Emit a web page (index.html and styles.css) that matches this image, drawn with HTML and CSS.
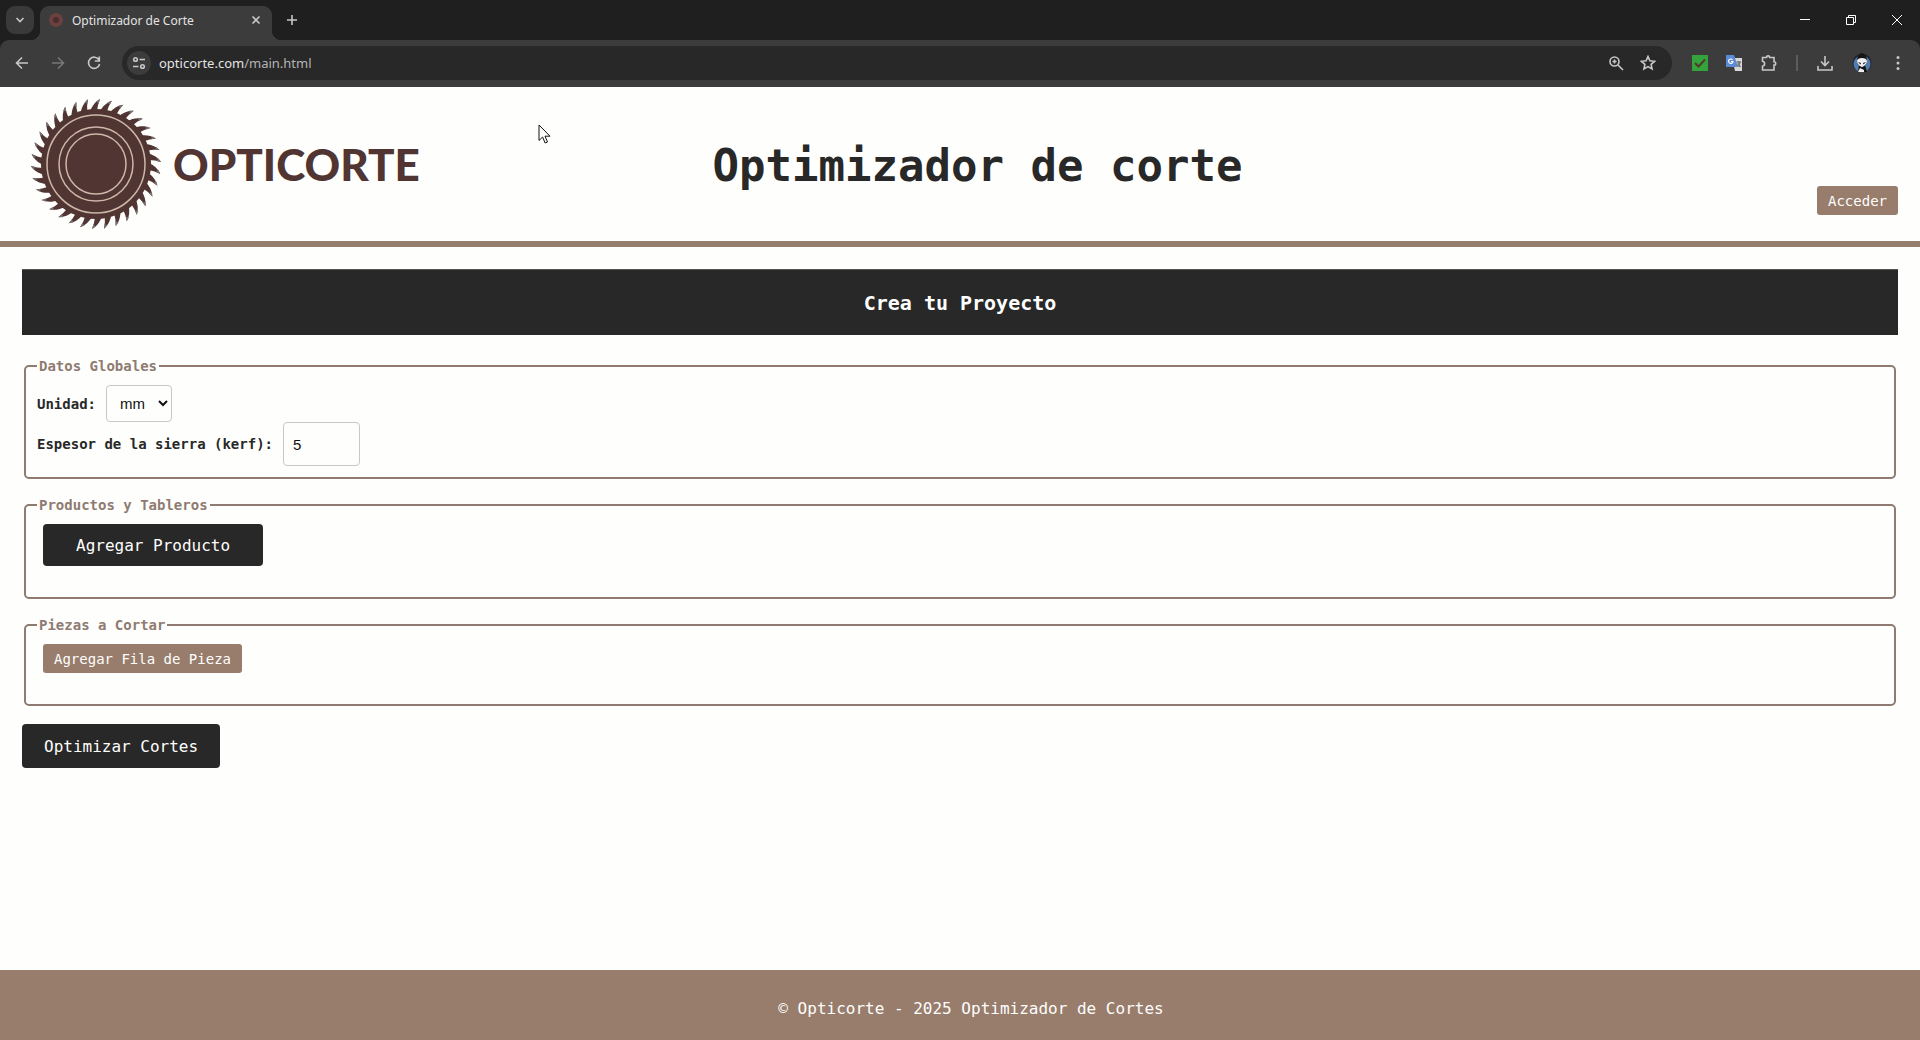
FILE: index.html
```html
<!DOCTYPE html>
<html lang="es">
  <head>
    <meta charset="UTF-8" />
    <meta name="viewport" content="width=device-width, initial-scale=1.0" />
    <title>Optimizador de Corte</title>
    <link rel="stylesheet" href="styles.css">
  </head>
  <body>
    <div class="browser">
      <div class="tabstrip">
        <button class="tab-search" aria-label="Buscar pestañas">
          <svg width="10" height="10" viewBox="0 0 10 10"><path d="M1.500 3l3.500 3.500L8.500 3" /></svg>
        </button>
        <div class="tab">
          <svg class="favicon" width="16" height="16" viewBox="0 0 16 16">
            <circle class="blade" cx="8" cy="8" r="7" />
            <circle class="hub" cx="8" cy="8" r="3" />
          </svg>
          <span class="tab-title">Optimizador de Corte</span>
          <button class="tab-close" aria-label="Cerrar">
            <svg width="10" height="10" viewBox="0 0 10 10"><path d="M1.500 1.500l7 7M8.500 1.500l-7 7" /></svg>
          </button>
        </div>
        <button class="tab-new" aria-label="Nueva pestaña">
          <svg width="12" height="12" viewBox="0 0 12 12"><path d="M6 1v10M1 6h10" /></svg>
        </button>
        <div class="window-buttons">
          <button aria-label="Minimizar"><svg width="12" height="12" viewBox="0 0 12 12"><path d="M1 5.500h10" /></svg></button>
          <button aria-label="Restaurar"><svg width="12" height="12" viewBox="0 0 12 12"><path d="M1.500 3.500h7v7h-7zM3.500 3.500v-2h7v7h-2" /></svg></button>
          <button aria-label="Cerrar ventana"><svg width="12" height="12" viewBox="0 0 12 12"><path d="M1 1l10 10M11 1L1 11" /></svg></button>
        </div>
      </div>
      <div class="toolbar">
        <button aria-label="Atrás"><svg width="16" height="16" viewBox="0 0 16 16"><path d="M14 8H3M8 2.500L2.500 8 8 13.500" /></svg></button>
        <button class="off" aria-label="Adelante"><svg width="16" height="16" viewBox="0 0 16 16"><path d="M2 8h11M8 2.500L13.500 8 8 13.500" /></svg></button>
        <button aria-label="Recargar"><svg width="16" height="16" viewBox="0 0 16 16"><path d="M13 5A5.600 5.600 0 1 0 13.600 9M13.300 1.500V6H8.800" /></svg></button>
        <div class="omnibox">
          <button class="site-info" aria-label="Información del sitio">
            <svg width="14" height="14" viewBox="0 0 14 14"><circle cx="3.500" cy="3.500" r="1.800" /><path d="M7.500 3.500H13M1 10.500h5.500" /><circle cx="10.500" cy="10.500" r="1.800" /></svg>
          </button>
          <p class="url">opticorte.com<span>/main.html</span></p>
          <button aria-label="Zoom"><svg width="16" height="16" viewBox="0 0 16 16"><circle cx="6.500" cy="6.500" r="4.500" /><path d="M10 10l5 5M4.500 6.500h4M6.500 4.500v4" /></svg></button>
          <button aria-label="Favoritos"><svg width="16" height="16" viewBox="0 0 16 16"><path d="M8 1.500l1.900 4.300 4.700.500-3.500 3.100 1 4.600L8 11.600 3.900 14l1-4.600L1.400 6.300l4.700-.500z" /></svg></button>
        </div>
        <div class="extensions">
          <button aria-label="Tareas">
            <svg width="16" height="16" viewBox="0 0 16 16"><path class="fill-green" d="M0 0h16v16H0z" /><path class="tick" d="M3 8l3.500 3.500L13 4.500" /></svg>
          </button>
          <button aria-label="Traductor">
            <svg class="plain" width="16" height="16" viewBox="0 0 16 16">
              <path fill="#d8d8d8" d="M6 3h10v13H9z" />
              <path fill="#5b8bd6" d="M0 0h8l4 12H0z" />
              <path d="M6.500 4.800A2.200 2.200 0 1 0 7 6.500H5" fill="none" stroke="#fff" stroke-width="1.200" />
              <path d="M10.500 7H15M12.700 6v1M14 7c-.500 2.500-1.500 3.500-2.500 4.500M11.500 8.500l3 3.500" fill="none" stroke="#777" />
            </svg>
          </button>
          <button aria-label="Extensiones"><svg width="18" height="18" viewBox="0 0 18 18"><path d="M2.500 3.500h4a1.600 1.600 0 0 1 3.200 0H14v4.200a1.600 1.600 0 0 1 0 3.400V16H2.500v-3.800c2.800-.500 2.800-4.400 0-4.900z" /></svg></button>
          <span class="divider"></span>
          <button aria-label="Descargas"><svg width="18" height="18" viewBox="0 0 18 18"><path d="M9 2v9M5 7.500l4 4 4-4M2 12v4h14v-4" /></svg></button>
          <button aria-label="Perfil">
            <svg class="plain" width="20" height="20" viewBox="0 0 20 20">
              <circle cx="10" cy="10" r="9.500" fill="#23262c" />
              <circle cx="10" cy="11" r="8.500" fill="#527bb0" />
              <path fill="#151515" d="M10 0c3 1 5 4 5 7l-2 5 2 7H6l1-7-2-5c0-3 2-6 5-7z" />
              <path fill="#eee" d="M5 8c0-4 10-4 10 0 0 2-3 6-5 6S5 10 5 8zM8 15l2 1 2 1v2H6z" />
              <path fill="#151515" d="M6 9l3 1-.500 1.500zM14 9l-3 1 .500 1.500z" />
            </svg>
          </button>
          <button aria-label="Menú">
            <svg class="dots" width="16" height="16" viewBox="0 0 16 16"><circle cx="8" cy="2.500" r="1.500" /><circle cx="8" cy="8" r="1.500" /><circle cx="8" cy="13.500" r="1.500" /></svg>
          </button>
        </div>
      </div>
    </div>

    <header class="header">
      <a class="logo" href="main.html">
        <svg class="saw" width="130" height="130" viewBox="-65 -65 130 130">
          <g id="teeth"></g>
          <circle r="55" />
          <g class="rings"><circle r="49" /><circle r="37" /><circle r="30" /></g>
        </svg>
        <span>OPTICORTE</span>
      </a>
      <h1>Optimizador de corte</h1>
      <div class="access"><button class="btn-small">Acceder</button></div>
    </header>

    <main class="main">
      <h2>Crea tu Proyecto</h2>
      <form class="project">
        <fieldset>
          <legend>Datos Globales</legend>
          <div class="row">
            <label for="unidad">Unidad:</label>
            <select id="unidad">
              <option>mm</option>
              <option>cm</option>
            </select>
          </div>
          <div class="row">
            <label for="kerf">Espesor de la sierra (kerf):</label>
            <input type="number" id="kerf" value="5" />
          </div>
        </fieldset>
        <fieldset>
          <legend>Productos y Tableros</legend>
          <button type="button" class="btn btn-wide">Agregar Producto</button>
        </fieldset>
        <fieldset>
          <legend>Piezas a Cortar</legend>
          <button type="button" class="btn-small">Agregar Fila de Pieza</button>
        </fieldset>
        <button type="button" class="btn">Optimizar Cortes</button>
      </form>
    </main>

    <footer class="footer">© Opticorte - 2025 Optimizador de Cortes</footer>

    <svg class="pointer" width="13" height="20" viewBox="0 0 13 20"><path d="M1 1v15.500l3.600-3.500 2.500 6 2.400-1-2.500-5.800H12z" fill="#fff" stroke="#111" /></svg>

    <script>
      // saw blade: one tooth repeated around the disc
      let teeth = "";
      for (let i = 0; i < 34; i++) {
        teeth += `<g transform="rotate(${(i * 360) / 34})">
  <path d="M-6 -52C-4 -58 -1 -62 4 -65L2 -59 1 -53z" />
  <path class="tip" d="M0 -62.500L4 -65 2.500 -60.500z" />
</g>`;
      }
      document.getElementById("teeth").innerHTML = teeth;
    </script>
  </body>
</html>
```
FILE: styles.css
```css
* {
  box-sizing: border-box;
}
body {
  margin: 0;
  min-height: 100vh;
  display: flex;
  flex-direction: column;
  background-color: #fefefd;
  color: #282828;
  font-family: "DejaVu Sans Mono", monospace;
  font-size: 16px;
}
button {
  font-family: inherit;
  border: none;
  cursor: pointer;
}

/* browser bar */
.browser {
  background-color: #1f1f1f;
  font-family: "Noto Sans", sans-serif;
}
.browser button {
  display: flex;
  align-items: center;
  justify-content: center;
  padding: 0;
  background: none;
}
.browser svg {
  fill: none;
  stroke: #c7c7c7;
  stroke-width: 1.6;
}
.browser svg.plain,
.browser svg.favicon {
  stroke: none;
}
.browser svg.dots {
  fill: #c7c7c7;
  stroke: none;
}
.blade {
  fill: #6b4040;
}
.hub {
  fill: #4c2c2c;
}
.tabstrip {
  display: flex;
  align-items: center;
  height: 40px;
  padding-left: 6px;
}
.browser .tab-search {
  width: 28px;
  height: 28px;
  border-radius: 9px;
  background-color: #3a3a3a;
}
.tab {
  position: relative;
  display: flex;
  align-items: center;
  align-self: flex-end;
  width: 232px;
  height: 34px;
  margin-left: 6px;
  padding: 0 11px 6px 8px;
  border-radius: 9px 9px 0 0;
  background-color: #3c3c3c;
}
.tab::before,
.tab::after {
  content: "";
  position: absolute;
  bottom: 0;
  width: 9px;
  height: 9px;
}
.tab::before {
  right: 100%;
  background: radial-gradient(circle at 0 0, transparent 9px, #3c3c3c 9px);
}
.tab::after {
  left: 100%;
  background: radial-gradient(circle at 100% 0, transparent 9px, #3c3c3c 9px);
}
.tab-title {
  flex: 1;
  margin-left: 8px;
  color: #e3e3e3;
  font-size: 12px;
}
.tab-new {
  margin-left: 14px;
}
.window-buttons {
  display: flex;
  margin-left: auto;
}
.window-buttons button {
  width: 46px;
  height: 40px;
}
.window-buttons svg {
  stroke: #fff;
  stroke-width: 1;
}
.toolbar {
  display: flex;
  align-items: center;
  height: 47px;
  padding: 0 14px 1px;
  gap: 20px;
  border-radius: 9px 9px 0 0;
  background-color: #3c3c3c;
}
.toolbar .off svg {
  stroke: #777;
}
.omnibox {
  flex: 1;
  display: flex;
  align-items: center;
  gap: 16px;
  height: 34px;
  padding: 0 16px 0 5px;
  border-radius: 17px;
  background-color: #282828;
}
.browser .site-info {
  width: 24px;
  height: 24px;
  border-radius: 50%;
  background-color: #3c3c3c;
}
.url {
  flex: 1;
  margin: 0 0 0 -8px;
  color: #e3e3e3;
  font-size: 13px;
}
.url span {
  color: #b4b4b4;
}
.extensions {
  display: flex;
  align-items: center;
  gap: 18px;
}
.browser .fill-green {
  fill: #35a33c;
  stroke: none;
}
.browser .tick {
  stroke: #54382e;
  stroke-width: 2;
}
.divider {
  width: 2px;
  height: 16px;
  background-color: #5c5c5c;
}

/* page header */
.header {
  display: grid;
  grid-template-columns: 1fr auto 1fr;
  align-items: center;
  height: 160px;
  padding: 0 22px 0 31px;
  border-bottom: 6px solid #967e6d;
}
.logo {
  display: flex;
  align-items: center;
  gap: 12px;
  color: #503532;
  font-family: Lato, sans-serif;
  font-size: 44px;
  font-weight: 900;
  text-decoration: none;
}
.saw {
  fill: #503532;
}
.saw .tip {
  fill: #77706f;
}
.rings {
  fill: none;
  stroke: #cbb8a8;
  stroke-width: 1.5;
}
h1 {
  margin: 0;
  padding: 2px 0 0 26px;
  font-size: 44px;
}
.access {
  align-self: end;
  justify-self: end;
  padding-bottom: 26px;
}
.btn-small {
  height: 29px;
  padding: 0 11px;
  border-radius: 3px;
  background-color: #987d6c;
  color: #fefefd;
  font-size: 14px;
}
.btn {
  height: 44px;
  padding: 0 22px;
  border-radius: 4px;
  background-color: #282828;
  color: #fefefd;
  font-size: 16px;
}

/* project form */
.main {
  flex: 1;
  padding: 22px;
}
h2 {
  margin: 0 0 23px;
  padding: 21px 21px 20px;
  border-top: 1px solid #555;
  background-color: #282828;
  color: #fefefd;
  font-size: 20px;
  line-height: 24px;
  text-align: center;
}
fieldset {
  margin: 0 2px 18px;
  padding: 11px;
  border: 2px solid #8f7b71;
  border-radius: 5px;
}
legend {
  padding: 0 2px;
  color: #8f7b71;
  font-size: 14px;
  font-weight: bold;
  line-height: 16px;
}
.row {
  display: flex;
  align-items: center;
  gap: 10px;
}
.row label {
  font-size: 14px;
  font-weight: bold;
}
.row select,
.row input {
  border: 1px solid #c8c8c8;
  border-radius: 4px;
  background-color: #fefefd;
  color: #111;
  font-family: "Liberation Sans", sans-serif;
  font-size: 15px;
}
.row select {
  width: 66px;
  height: 37px;
  padding: 0 0 0 9px;
}
.row input {
  width: 77px;
  height: 44px;
  padding: 0 9px;
}
.btn-wide {
  height: 42px;
  padding: 0 33px;
}
fieldset > button {
  display: block;
  margin: 0 6px 20px;
}

.footer {
  padding: 29px 0 22px 22px;
  background-color: #987d6c;
  color: #fefefd;
  line-height: 19px;
  text-align: center;
}
/* mouse pointer over the page */
.pointer {
  position: absolute;
  left: 538px;
  top: 124px;
}
```
